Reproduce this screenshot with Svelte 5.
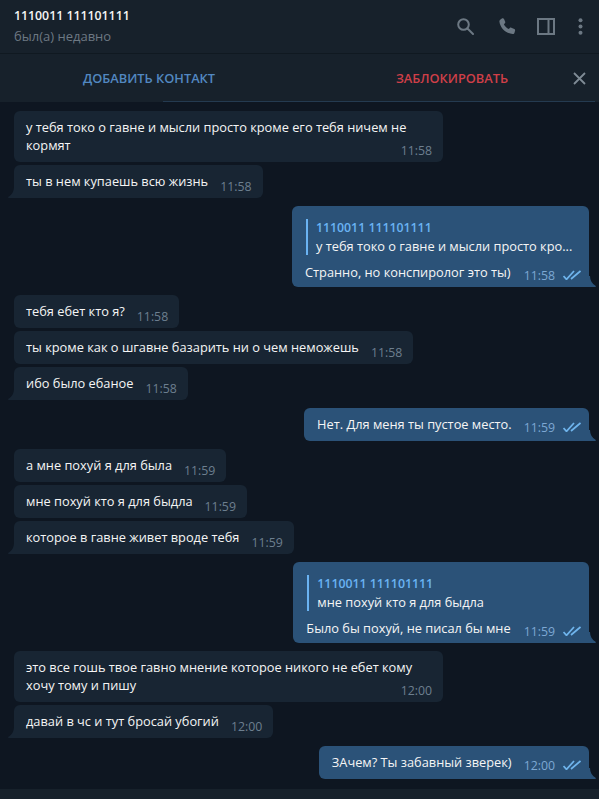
<script>
  const me = '1110011 111101111';
  const groups = [
    { out: false, items: [
      { first: 'у тебя токо о гавне и мысли просто кроме его тебя ничем не', text: 'кормят', time: '11:58' },
      { text: 'ты в нем купаешь всю жизнь', time: '11:58' }
    ] },
    { out: true, items: [
      { quote: 'у тебя токо о гавне и мысли просто кро...', text: 'Странно, но конспиролог это ты)', time: '11:58' }
    ] },
    { out: false, items: [
      { text: 'тебя ебет кто я?', time: '11:58' },
      { text: 'ты кроме как о шгавне базарить ни о чем неможешь', time: '11:58' },
      { text: 'ибо было ебаное', time: '11:58' }
    ] },
    { out: true, items: [
      { text: 'Нет. Для меня ты пустое место.', time: '11:59' }
    ] },
    { out: false, items: [
      { text: 'а мне похуй я для была', time: '11:59' },
      { text: 'мне похуй кто я для быдла', time: '11:59' },
      { text: 'которое в гавне живет вроде тебя', time: '11:59' }
    ] },
    { out: true, items: [
      { quote: 'мне похуй кто я для быдла', text: 'Было бы похуй, не писал бы мне', time: '11:59' }
    ] },
    { out: false, items: [
      { first: 'это все гошь твое гавно мнение которое никого не ебет кому', text: 'хочу тому и пишу', time: '12:00' },
      { text: 'давай в чс и тут бросай убогий', time: '12:00' }
    ] },
    { out: true, items: [
      { text: 'ЗАчем? Ты забавный зверек)', time: '12:00' }
    ] }
  ];
</script>

<div class="window">
  <header class="topbar">
    <div class="peer">
      <div class="peer__name">{me}</div>
      <div class="peer__status">был(а) недавно</div>
    </div>
    <div class="actions">
      <svg class="icon-search" width="17" height="17" viewBox="0 0 17 17" fill="none" stroke="#6c7883" stroke-width="2">
        <circle cx="6.500" cy="6.500" r="5.300" />
        <path d="M10.500 10.500l5.500 5.500" stroke-linecap="round" />
      </svg>
      <svg class="icon-phone" width="17" height="17" viewBox="0 0 17 17" fill="#6c7883">
        <path d="M3.200 0.300C4 0 4.700.3 5 1l1.200 2.800c.2.500.1 1.100-.3 1.500l-1 .9c.9 2 2.800 3.900 4.900 4.800l1-1c.4-.4 1-.5 1.500-.3l3 1.200c.7.300 1 1 .8 1.700l-.6 2.200c-.2.800-.9 1.300-1.800 1.200C6.500 15.500 1 9.500.4 3.500.3 2.700.8 2 1.500 1.600z" />
      </svg>
      <svg class="icon-panel" width="18" height="17" viewBox="0 0 18 17" fill="none" stroke="#6c7883" stroke-width="2">
        <rect x="1" y="1" width="16" height="15" />
        <path d="M11.500 1v15" />
      </svg>
      <svg class="icon-dots" width="5" height="17" viewBox="0 0 5 17" fill="#6c7883">
        <circle cx="2.500" cy="2.300" r="2" />
        <circle cx="2.500" cy="8.500" r="2" />
        <circle cx="2.500" cy="14.700" r="2" />
      </svg>
    </div>
  </header>

  <div class="contact">
    <span class="contact__add">ДОБАВИТЬ КОНТАКТ</span>
    <span class="contact__block">ЗАБЛОКИРОВАТЬ</span>
    <svg width="13" height="13" viewBox="0 0 13 13" stroke="#7f8b95" stroke-width="1.800" fill="none">
      <path d="M1 1l11 11M12 1L1 12" />
    </svg>
  </div>

  <main class="history">
    {#each groups as group}
      <section class="group" class:group--out={group.out}>
        {#each group.items as item, i}
          <div class="bubble" class:bubble--wide={item.first} class:bubble--tail={i === group.items.length - 1} class:bubble--reply={item.quote}>
            {#if item.quote}
              <div class="reply">
                <div class="reply__name">{me}</div>
                <div class="reply__text">{item.quote}</div>
              </div>
            {/if}
            {#if item.first}
              <div>{item.first}</div>
            {/if}
            <div class="line">
              <span>{item.text}</span>
              <span class="meta">
                <span>{item.time}</span>
                {#if group.out}
                  <svg class="check" width="18" height="10" viewBox="0 0 18 10" fill="none" stroke="#6fb4ec" stroke-width="1.700">
                    <path d="M.5 6l3 3.400L11 1M8 9L17.500 1" />
                  </svg>
                {/if}
              </span>
            </div>
            {#if i === group.items.length - 1}
              <svg class="tail" width="9" height="11" viewBox="0 0 9 11">
                <path d="M9 0v11H1c-1 0-1.200-.8-.5-1.300C4 7.500 6 4.500 6 0z" />
              </svg>
            {/if}
          </div>
        {/each}
      </section>
    {/each}
  </main>

  <div class="composer"></div>
</div>

<style>
  :global(body) {
    background: #0e1621;
    overflow: hidden;
  }

  .window {
    display: flex;
    flex-direction: column;
    width: 599px;
    height: 799px;
    color: #f5f5f5;
    font-family: "Open Sans", "Noto Sans", sans-serif;
    font-size: 12.800px;
    line-height: 18px;
    overflow: hidden;
  }

  .topbar {
    display: flex;
    justify-content: space-between;
    flex: 0 0 54px;
    padding: 7px 16px 0 14px;
    background: #17212b;
    box-sizing: border-box;
    border-bottom: 1px solid #101921;
  }

  .peer__name {
    font-size: 12.300px;
    font-weight: 600;
  }

  .peer__status {
    margin-top: 2px;
    color: #6d7883;
    font-size: 13px;
  }

  .actions {
    display: flex;
    align-items: flex-start;
    padding-top: 11px;
  }

  .icon-phone {
    margin-left: 25px;
  }

  .icon-panel {
    margin-left: 21px;
  }

  .icon-dots {
    margin-left: 23px;
  }

  .contact {
    display: flex;
    align-items: center;
    position: relative;
    flex: 0 0 48px;
    padding-right: 13px;
    box-sizing: border-box;
    background: #17212b;
    font-size: 12.800px;
    font-weight: 600;
  }

  .contact::after {
    content: "";
    position: absolute;
    left: 163px;
    right: 4px;
    bottom: 0;
    height: 1px;
    background: #243a50;
  }

  .contact__add {
    flex: 0 0 298px;
    color: #5288c1;
    text-align: center;
  }

  .contact__block {
    flex: 1;
    padding-left: 33px;
    color: #cf3f48;
    text-align: center;
  }

  .history {
    display: flex;
    flex: 1;
    flex-direction: column;
    gap: 8px;
    padding: 9px 10px 0 14px;
    min-height: 0;
  }

  .group {
    display: flex;
    flex-direction: column;
    align-items: flex-start;
    gap: 3px;
  }

  .group--out {
    align-items: flex-end;
  }

  .bubble {
    position: relative;
    padding: 7px 11px 8px 12px;
    background: #182533;
    border-radius: 6px;
    box-sizing: border-box;
  }

  .group--out .bubble {
    padding-left: 13px;
    padding-right: 8px;
    background: #2b5278;
  }

  .bubble--tail {
    border-bottom-left-radius: 0;
  }

  .group--out .bubble--tail {
    border-bottom-left-radius: 6px;
    border-bottom-right-radius: 0;
  }

  .bubble--wide {
    width: 429px;
  }

  .group .bubble--reply {
    padding-bottom: 6px;
  }

  .line {
    display: flex;
    justify-content: space-between;
    gap: 12px;
  }

  .bubble--reply .line {
    gap: 13px;
  }

  .meta {
    display: flex;
    align-items: center;
    gap: 8px;
    position: relative;
    top: 6px;
    color: #6d7f8f;
    font-size: 12.300px;
  }

  .group--out .meta {
    top: 4px;
    color: #7da8d3;
  }

  .check {
    margin-bottom: 2px;
  }

  .reply {
    margin: 6px 0 8px 1px;
    padding-left: 8px;
    border-left: 2px solid #6ab3f3;
  }

  .reply__name {
    color: #6ab3f3;
    font-size: 12.300px;
    font-weight: 600;
  }

  .tail {
    position: absolute;
    left: -6px;
    bottom: 0;
    fill: #182533;
  }

  .group--out .tail {
    left: auto;
    right: -7px;
    transform: scaleX(-1);
    fill: #2b5278;
  }

  .composer {
    flex: 0 0 10px;
    background: #17212b;
  }
</style>
